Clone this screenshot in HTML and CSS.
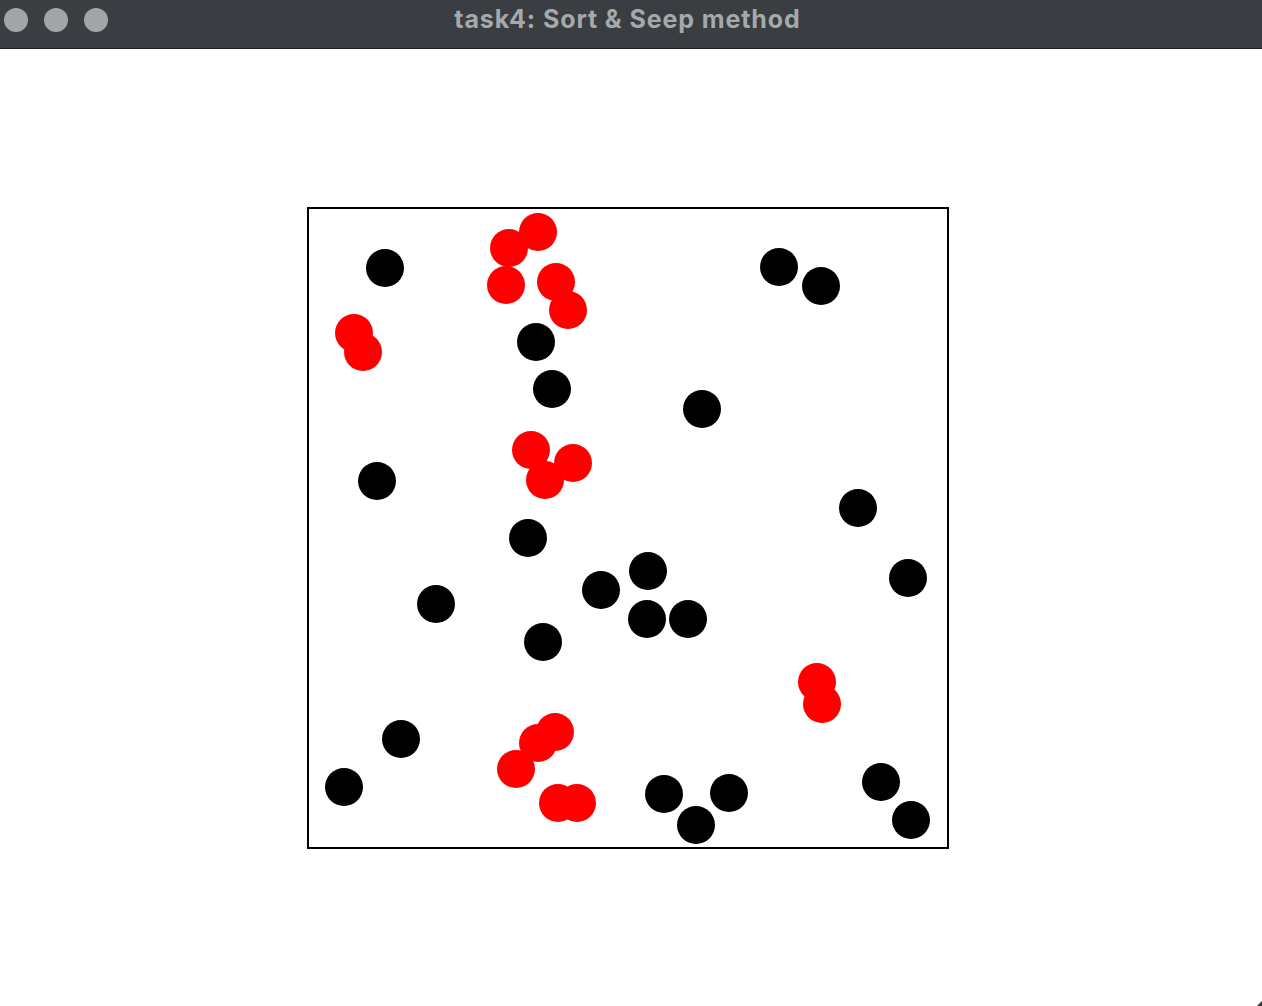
FILE: index.html
```html
<!DOCTYPE html>
<html>
<head>
<meta charset="utf-8">
<link rel="stylesheet" href="styles.css">
</head>
<body>
<div class="window">
  <header class="titlebar">
    <div class="lights">
      <span class="light"></span>
      <span class="light"></span>
      <span class="light"></span>
    </div>
    <div class="title">task4: Sort &amp; Seep method</div>
    <div class="spacer"></div>
  </header>
  <main class="content">
    <div class="board">
      <svg class="balls" width="638" height="638" viewBox="309 209 638 638" xmlns="http://www.w3.org/2000/svg">
        <g fill="#000">
          <circle cx="385" cy="268" r="19"/>
          <circle cx="779" cy="267" r="19"/>
          <circle cx="821" cy="286" r="19"/>
          <circle cx="536" cy="342" r="19"/>
          <circle cx="552" cy="389" r="19"/>
          <circle cx="702" cy="409" r="19"/>
          <circle cx="377" cy="481" r="19"/>
          <circle cx="858" cy="508" r="19"/>
          <circle cx="528" cy="538" r="19"/>
          <circle cx="648" cy="571" r="19"/>
          <circle cx="601" cy="590" r="19"/>
          <circle cx="908" cy="578" r="19"/>
          <circle cx="436" cy="604" r="19"/>
          <circle cx="647" cy="619" r="19"/>
          <circle cx="688" cy="619" r="19"/>
          <circle cx="543" cy="642" r="19"/>
          <circle cx="401" cy="739" r="19"/>
          <circle cx="344" cy="787" r="19"/>
          <circle cx="881" cy="782" r="19"/>
          <circle cx="664" cy="794" r="19"/>
          <circle cx="729" cy="793" r="19"/>
          <circle cx="696" cy="825" r="19"/>
          <circle cx="911" cy="820" r="19"/>
        </g>
        <g fill="#ff0000">
          <circle cx="538" cy="232" r="19"/>
          <circle cx="509" cy="248" r="19"/>
          <circle cx="506" cy="285" r="19"/>
          <circle cx="556" cy="282" r="19"/>
          <circle cx="568" cy="310" r="19"/>
          <circle cx="354" cy="333" r="19"/>
          <circle cx="363" cy="352" r="19"/>
          <circle cx="531" cy="450" r="19"/>
          <circle cx="573" cy="463" r="19"/>
          <circle cx="545" cy="480" r="19"/>
          <circle cx="817" cy="682" r="19"/>
          <circle cx="822" cy="704" r="19"/>
          <circle cx="555" cy="732" r="19"/>
          <circle cx="538" cy="743" r="19"/>
          <circle cx="516" cy="769" r="19"/>
          <circle cx="558" cy="803" r="19"/>
          <circle cx="577" cy="803" r="19"/>
        </g>
      </svg>
    </div>
  </main>
  <span class="grip"></span>
</div>
</body>
</html>
```

FILE: styles.css
```css
html, body {
  margin: 0;
  padding: 0;
  background: #ffffff;
}

.window {
  position: relative;
  width: 1262px;
  height: 1006px;
  overflow: hidden;
  background: #ffffff;
}

.titlebar {
  height: 48px;
  background: #3a3d41;
  border-bottom: 1px solid #1c1d1f;
  display: grid;
  grid-template-columns: 1fr auto 1fr;
  align-items: center;
  box-sizing: content-box;
}

.lights {
  display: flex;
  gap: 16px;
  padding-left: 4px;
  align-self: start;
  padding-top: 8px;
}

.light {
  width: 24px;
  height: 24px;
  border-radius: 50%;
  background: #a2a5a8;
}

.title {
  font-family: "Inter", "Liberation Sans", sans-serif;
  font-weight: 700;
  font-size: 25px;
  letter-spacing: 0.9px;
  color: #a6a9ac;
  padding-bottom: 11px;
  margin-left: -7px;
}

.content {
  padding-top: 158px;
  padding-left: 307px;
}

.board {
  width: 638px;
  height: 638px;
  border: 2px solid #000000;
}

.balls {
  display: block;
}

.grip {
  position: absolute;
  right: 0;
  bottom: 0;
  width: 0;
  height: 0;
  border-left: 5px solid transparent;
  border-bottom: 5px solid #333;
}
```
